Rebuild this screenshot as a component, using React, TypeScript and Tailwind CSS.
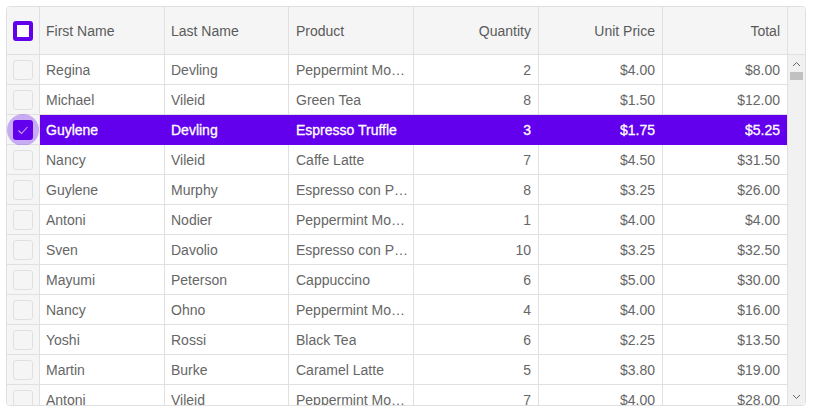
const rows: [string, string, string, string, string, string][] = [
  ["Regina", "Devling", "Peppermint Mocha Twist", "2", "$4.00", "$8.00"],
  ["Michael", "Vileid", "Green Tea", "8", "$1.50", "$12.00"],
  ["Guylene", "Devling", "Espresso Truffle", "3", "$1.75", "$5.25"],
  ["Nancy", "Vileid", "Caffe Latte", "7", "$4.50", "$31.50"],
  ["Guylene", "Murphy", "Espresso con Panna", "8", "$3.25", "$26.00"],
  ["Antoni", "Nodier", "Peppermint Mocha Twist", "1", "$4.00", "$4.00"],
  ["Sven", "Davolio", "Espresso con Panna", "10", "$3.25", "$32.50"],
  ["Mayumi", "Peterson", "Cappuccino", "6", "$5.00", "$30.00"],
  ["Nancy", "Ohno", "Peppermint Mocha Twist", "4", "$4.00", "$16.00"],
  ["Yoshi", "Rossi", "Black Tea", "6", "$2.25", "$13.50"],
  ["Martin", "Burke", "Caramel Latte", "5", "$3.80", "$19.00"],
  ["Antoni", "Vileid", "Peppermint Mocha Twist", "7", "$4.00", "$28.00"],
];

const widths = ["w-[125px]", "w-[124px]", "w-[125px]", "w-[125px]", "w-[124px]", "w-[124px]"];
const pads = ["pl-[6px] pr-[6px]", "pl-[6px] pr-[6px]", "pl-[7px] pr-[2px]", "pl-[6px] pr-[7px]", "pl-[6px] pr-[7px]", "pl-[6px] pr-[7px]"];
const headers = ["First Name", "Last Name", "Product", "Quantity", "Unit Price", "Total"];

export default function App() {
  return (
    <div className="pt-[6px] pl-[6px] font-['Liberation_Sans',Arial,sans-serif] text-[14px]">
      <div className="w-[800px] h-[400px] border border-[#e0e0e0] rounded-[4px] overflow-hidden flex">
        <div className="w-[780px] flex flex-col">
          <div className="h-[48px] shrink-0 flex bg-[#f5f5f5] border-b border-[#e0e0e0] text-[#5a5a5a]">
            <div className="w-[33px] shrink-0 border-r border-[#e0e0e0] flex items-center justify-center">
              <div className="w-5 h-5 rounded-[3px] bg-[#6200ee] flex items-center justify-center">
                <div className="w-3 h-3 bg-white" />
              </div>
            </div>
            {headers.map((h, i) => (
              <div
                key={h}
                className={`${widths[i]} ${pads[i]} shrink-0 pt-[2px] flex items-center ${i < 5 ? "border-r border-[#e0e0e0]" : ""} ${i >= 3 ? "justify-end" : ""}`}
              >
                {h}
              </div>
            ))}
          </div>
          <div className="flex-1 overflow-hidden">
            {rows.map((r, ri) => {
              const sel = ri === 2;
              return (
                <div key={ri} className="h-[30px] flex">
                  <div className="w-[33px] shrink-0 bg-[#f5f5f5] border-r border-b border-[#e0e0e0] flex items-center justify-center relative">
                    {sel ? (
                      <>
                        <div className="absolute left-0 top-[-1px] w-[32px] h-[32px] rounded-full bg-[#6200ee]/30" />
                        <div className="relative w-5 h-5 rounded-[3px] bg-[#6200ee] flex items-center justify-center">
                          <svg width="12" height="12" viewBox="0 0 12 12" fill="none" stroke="#c9a6f7" strokeWidth="1.1">
                            <path d="M1.5 6.5 L4.5 9.5 L10.5 3" />
                          </svg>
                        </div>
                      </>
                    ) : (
                      <div className="w-5 h-5 rounded-[3px] border border-[#e0e0e0] bg-[#f5f5f5]" />
                    )}
                  </div>
                  {r.map((c, i) => (
                    <div
                      key={i}
                      className={`${widths[i]} ${pads[i]} shrink-0 pt-[2px] flex items-center min-w-0 border-b ${i < 5 ? "border-r" : ""} ${
                        sel ? "bg-[#6200ee] border-[#6200ee] text-white [-webkit-text-stroke:0.3px_white]" : "bg-white border-[#e0e0e0] text-[#666666]"
                      } ${i >= 3 ? "justify-end" : ""}`}
                    >
                      <span className="truncate">{c}</span>
                    </div>
                  ))}
                </div>
              );
            })}
          </div>
        </div>
        <div className="w-[18px] shrink-0 border-l border-[#e0e0e0] bg-[#f1f1f1] flex flex-col">
          <div className="h-[48px] shrink-0 bg-[#f5f5f5] border-b border-[#e0e0e0]" />
          <div className="h-[17px] shrink-0 flex items-center justify-center">
            <svg width="9" height="6" viewBox="0 0 9 6" fill="none" stroke="#666" strokeWidth="1">
              <path d="M1 5 L4.5 1.5 L8 5" />
            </svg>
          </div>
          <div className="mx-[2px] h-[8px] shrink-0 bg-[#c1c1c1]" />
          <div className="flex-1" />
          <div className="h-[17px] shrink-0 flex items-center justify-center">
            <svg width="9" height="6" viewBox="0 0 9 6" fill="none" stroke="#666" strokeWidth="1">
              <path d="M1 1 L4.5 4.5 L8 1" />
            </svg>
          </div>
        </div>
      </div>
    </div>
  );
}
